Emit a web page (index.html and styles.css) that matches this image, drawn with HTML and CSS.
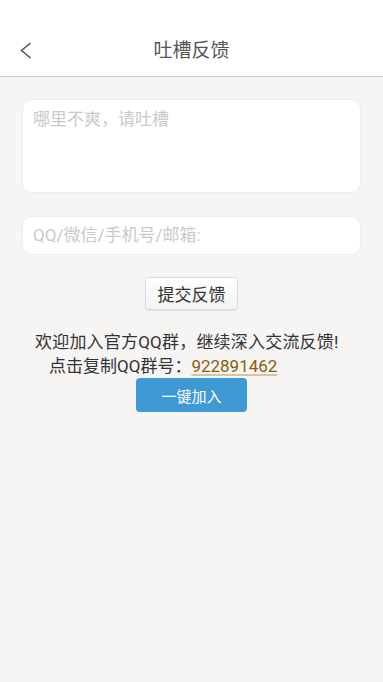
FILE: index.html
```html
<!DOCTYPE html>
<html lang="zh-CN">
<head>
<meta charset="utf-8">
<title>吐槽反馈</title>
<link rel="stylesheet" href="styles.css">
</head>
<body>
<header class="header">
  <div class="nav">
    <span class="back">
      <svg width="12" height="18" viewBox="0 0 12 18"><polyline points="10.5,1 1.5,8.5 10.5,16" fill="none" stroke="#555" stroke-width="1.6"/></svg>
    </span>
    <h1 class="title">吐槽反馈</h1>
  </div>
</header>
<main class="content">
  <textarea class="box area" placeholder="哪里不爽，请吐槽"></textarea>
  <input class="box field" type="text" placeholder="QQ/微信/手机号/邮箱:">
  <div class="actions"><button class="submit">提交反馈</button></div>
  <div class="info">
    <div class="line1">欢迎加入官方QQ群，继续深入交流反馈!</div>
    <div class="line2">点击复制QQ群号：<a class="qq">922891462</a></div>
  </div>
  <div class="actions"><button class="join">一键加入</button></div>
</main>
</body>
</html>
```
FILE: styles.css
```css
html, body {
  margin: 0;
  padding: 0;
  background: #f6f5f3;
  font-family: Roboto, "Noto Sans CJK SC", sans-serif;
  height: 100%;
}
.header {
  background: #fff;
  padding-top: 26px;
  border-bottom: 1px solid #c8c8c8;
}
.nav {
  height: 50px;
  display: flex;
  align-items: center;
  justify-content: center;
  position: relative;
}
.back {
  position: absolute;
  left: 20px;
  top: 16px;
  width: 12px;
  height: 18px;
  display: block;
}
.back svg { display: block; }
.title {
  margin: 0;
  font-size: 19px;
  font-weight: normal;
  color: #555;
  line-height: 24px;
}
.content {
  padding: 22px 22px 0;
  display: flex;
  flex-direction: column;
}
.box {
  box-sizing: border-box;
  width: 100%;
  border: 1px solid #eeeeee;
  border-radius: 10px;
  background: #fff;
  font-family: Roboto, "Noto Sans CJK SC", sans-serif;
  font-size: 17px;
  color: #333;
  outline: none;
  padding: 0 10px;
  margin: 0;
}
.box::placeholder { color: #c9c9c9; }
.area {
  height: 94px;
  resize: none;
  padding-top: 8px;
  line-height: 22px;
}
.field {
  height: 39px;
  margin-top: 23px;
  line-height: 39px;
}
.actions {
  display: flex;
  justify-content: center;
}
.submit {
  margin-top: 22px;
  width: 93px;
  height: 33px;
  border: 1px solid #dcdcdc;
  border-radius: 3px;
  background: linear-gradient(#ffffff, #f2f2f2);
  box-shadow: 0 1px 1px rgba(0,0,0,0.08);
  font-family: Roboto, "Noto Sans CJK SC", sans-serif;
  font-size: 17px;
  color: #333;
  padding: 0;
}
.info {
  margin-top: 20px;
  font-size: 17px;
  color: #333;
  line-height: 24px;
}
.line1 {
  padding-left: 13px;
  letter-spacing: 0.2px;
  white-space: nowrap;
}
.line2 {
  padding-left: 27px;
}
.qq {
  color: #8a5d0c;
  text-decoration: underline;
  text-decoration-color: #d8c49e;
  text-decoration-thickness: 2px;
  text-underline-offset: 2px;
}
.join {
  margin-top: 0;
  width: 111px;
  height: 34px;
  border: none;
  border-radius: 4px;
  background: #3d9ad5;
  color: #fff;
  font-family: Roboto, "Noto Sans CJK SC", sans-serif;
  font-size: 15px;
  padding: 0;
}
```
